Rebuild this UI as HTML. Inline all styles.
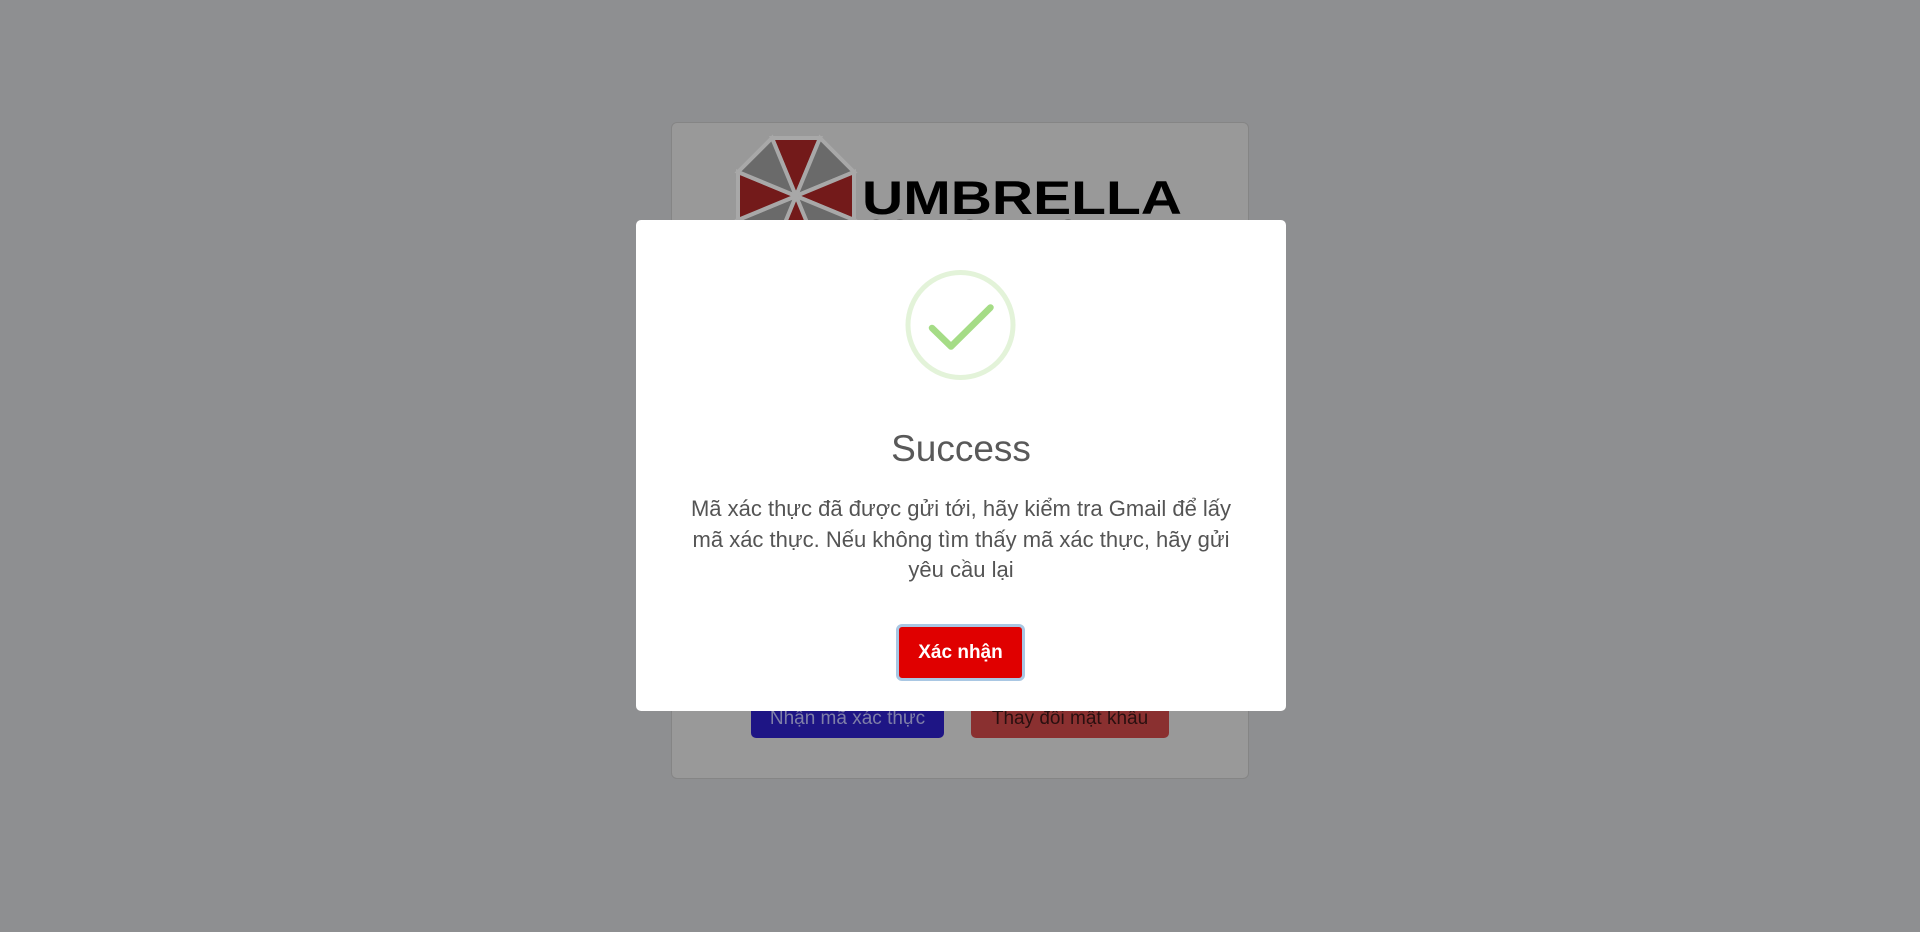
<!DOCTYPE html>
<html><head><meta charset="utf-8"><style>
html,body{margin:0;padding:0;width:1920px;height:932px;overflow:hidden;background:#8e8f91;font-family:"Liberation Sans","DejaVu Sans",sans-serif;}
.card{position:absolute;left:671px;top:122px;width:576px;height:655px;background:#999;border:1px solid #858585;border-radius:6px;}
.b{position:absolute;top:700px;height:38px;border-radius:5px;font-size:19px;line-height:38px;text-align:center;}
.modal{position:absolute;left:636px;top:220px;width:650px;height:491px;background:#fff;border-radius:5px;}
.title{position:absolute;left:0;width:650px;text-align:center;font-size:37px;color:#595959;}
.txt{position:absolute;text-align:center;font-size:22px;line-height:30.6px;color:#545454;}
.btn{position:absolute;left:896px;top:624px;width:123px;height:51px;background:#e00000;border:3px solid #a9c7e3;border-radius:6px;color:#fff;font-weight:bold;font-size:19px;line-height:51px;text-align:center;box-sizing:content-box;}
</style></head><body>
<div class="card"></div>
<svg style="position:absolute;left:0;top:0" width="1920" height="932">
 <g transform="translate(796,196)">
  <g stroke="#a8a8a8" stroke-width="4">
   <path d="M0,0 L-24,-58 L24,-58Z" fill="#731a1a"/>
   <path d="M0,0 L24,-58 L58,-24Z" fill="#6a6a6a"/>
   <path d="M0,0 L58,-24 L58,24Z" fill="#731a1a"/>
   <path d="M0,0 L58,24 L24,58Z" fill="#6a6a6a"/>
   <path d="M0,0 L24,58 L-24,58Z" fill="#731a1a"/>
   <path d="M0,0 L-24,58 L-58,24Z" fill="#6a6a6a"/>
   <path d="M0,0 L-58,24 L-58,-24Z" fill="#731a1a"/>
   <path d="M0,0 L-58,-24 L-24,-58Z" fill="#6a6a6a"/>
  </g>
 </g>
 <text x="862" y="214" font-family="Liberation Sans,sans-serif" font-weight="bold" font-size="47" fill="#000" textLength="320" lengthAdjust="spacingAndGlyphs">UMBRELLA</text>
 <text x="864" y="238" font-family="Liberation Sans,sans-serif" font-weight="bold" font-size="26" fill="#000" textLength="240" lengthAdjust="spacingAndGlyphs">CORPORATION</text>
</svg>
<div class="b" style="left:751px;width:193px;background:#1e1585;color:#7f7fa8;">Nhận mã xác thực</div>
<div class="b" style="left:971px;width:198px;background:#8a3030;color:#2a1010;">Thay đổi mật khẩu</div>
<div class="modal"></div>
<svg style="position:absolute;left:0;top:0" width="1920" height="932">
 <circle cx="960.5" cy="325" r="52.5" fill="none" stroke="#e3f3d9" stroke-width="5"/>
 <path d="M932,328 L951,346.5 L990.5,307.5" fill="none" stroke="#a5dc86" stroke-width="6.5" stroke-linecap="round" stroke-linejoin="round"/>
</svg>
<div class="modal" style="background:none">
 <div class="title" style="top:208px">Success</div>
 <div class="txt" style="top:274px;left:45px;width:560px">Mã xác thực đã được gửi tới, hãy kiểm tra Gmail để lấy mã xác thực. Nếu không tìm thấy mã xác thực, hãy gửi yêu cầu lại</div>
</div>
<div class="btn">Xác nhận</div>
</body></html>
